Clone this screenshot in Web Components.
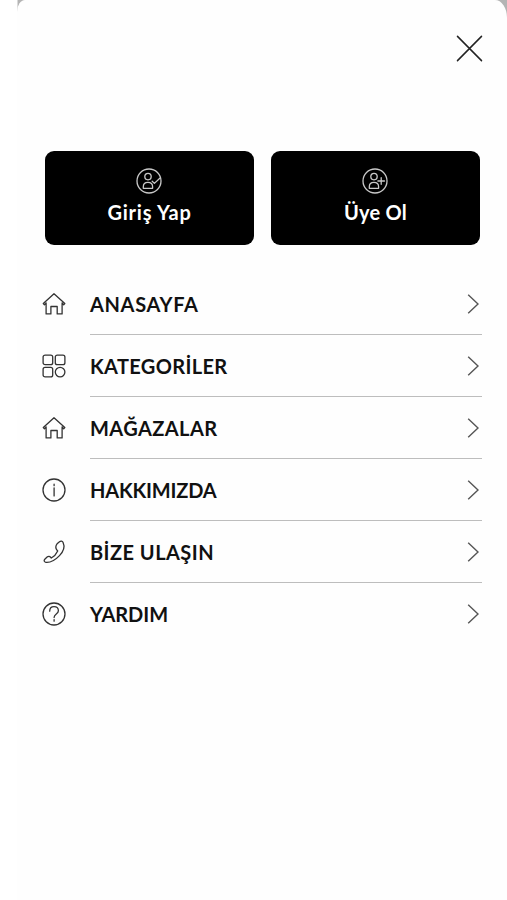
<!DOCTYPE html>
<html lang="tr"><head><meta charset="utf-8"><title>Menü</title>
<style>html,body{margin:0;background:#fff;height:900px;overflow:hidden}</style></head>
<body>
<side-menu>
  <close-button slot="close"></close-button>
  <auth-button slot="auth" icon="check" fit="84">Giriş Yap</auth-button>
  <auth-button slot="auth" icon="plus" fit="63">Üye Ol</auth-button>
  <menu-item icon="home" fit="108.5">ANASAYFA</menu-item>
  <menu-item icon="grid" fit="137.5">KATEGORİLER</menu-item>
  <menu-item icon="home" fit="127.5">MAĞAZALAR</menu-item>
  <menu-item icon="info" fit="126.5">HAKKIMIZDA</menu-item>
  <menu-item icon="phone" fit="124">BİZE ULAŞIN</menu-item>
  <menu-item icon="help" fit="78" last>YARDIM</menu-item>
</side-menu>
<script>
const ICONS = {
  home: '<path d="M2.3 12.6 13 2.8l10.8 9.8M5.1 11.8v11.1h4.8v-7.4h6.3v7.4h4.9V11.8M2.3 12.6l1.1 1.1 1.7-1.5M23.8 12.6l-1.1 1.1-1.6-1.5"/>',
  grid: '<rect x="2.1" y="2.1" width="9.6" height="9.6" rx="2"/><rect x="14.3" y="2.1" width="9.6" height="9.6" rx="2"/><rect x="2.1" y="14.3" width="9.6" height="9.6" rx="2"/><circle cx="19.1" cy="19.1" r="4.8"/>',
  info: '<circle cx="13" cy="13" r="11"/><path d="M13.1 10.8v8.1M13.1 7.2v1.5"/>',
  phone: '<path d="M16.4 4.4 18.5 2.7c1.2-1 2.8-.8 3.5.6 1.9 4.1.6 9.1-3.5 13.3-4.2 4.4-9.2 7.1-13.6 6.7-1.8-.2-2.3-1.9-1.1-3.1l2.3-2.1c1.1-1 2.6-.9 3.5.1l.7.8c2.8-1.6 5-4 6.4-7.1l-.8-.9c-1.4-1.7-1.4-4.2.5-6.6z"/>',
  help: '<circle cx="13" cy="13" r="11"/><path d="M8.7 10.2c0-2.8 1.8-4.5 4.3-4.5s4.4 1.6 4.4 4.1c0 3.2-4.3 3.3-4.3 6.7M13.1 18.6v1.6"/>',
  check: '<circle cx="13" cy="13" r="12"/><circle cx="12" cy="8.6" r="3.2"/><path d="M7.3 20.3v-1.5c0-3 1.8-4.4 4.6-4.4s4.7 1.4 4.7 4.4v1.5zM16.2 13.3l2.2 2.1 5.4-5.2"/>',
  plus: '<circle cx="13" cy="13" r="12"/><circle cx="12" cy="8.6" r="3.2"/><path d="M7.3 20.3v-1.5c0-3 1.8-4.4 4.6-4.4s4.7 1.4 4.7 4.4v1.5zM19.2 9.7v6.6M15.9 13h6.6"/>'
};
const svg = (name) => `<svg viewBox="0 0 26 26" width="26" height="26" fill="none" stroke="currentColor" stroke-width="1.3" stroke-linejoin="round" stroke-linecap="round">${ICONS[name]}</svg>`;

// Tracks a label out or in so that it takes the requested width.
function fitLabel(host) {
  const label = host.shadowRoot.querySelector('.label');
  const n = host.textContent.length;
  const w = label.getBoundingClientRect().width;
  label.style.letterSpacing = ((+host.getAttribute('fit') - w) / n) + 'px';
}

customElements.define('side-menu', class extends HTMLElement {
  constructor() {
    super();
    this.attachShadow({mode: 'open'}).innerHTML = `<style>
      :host{display:block;height:900px;background:linear-gradient(90deg,#fff 0 17px,#b4b4b4 18px);font-family:Lato,"Noto Sans",sans-serif;color:#111}
      .sheet{box-sizing:border-box;height:900px;margin-left:17px;background:#fefefe;border-radius:8px 12px 0 0 / 12px 18px 0 0;padding:35px 25px 0 25px}
      header{display:flex;justify-content:flex-end;height:115.5px}
      .auth{display:grid;grid-template-columns:209px 209px;gap:17px;padding-left:3px}
      nav{display:block;padding-top:28px}
    </style><div class="sheet"><header><slot name="close"></slot></header><div class="auth"><slot name="auth"></slot></div><nav><slot></slot></nav></div>`;
  }
});
customElements.define('close-button', class extends HTMLElement {
  constructor() {
    super();
    this.attachShadow({mode: 'open'}).innerHTML = `<style>:host{display:block;width:27px;height:27px;margin-right:-1px}svg{display:block}</style>
    <svg width="27" height="27" fill="none" stroke="#222" stroke-width="1.5" stroke-linecap="round"><path d="M1.5 1.4 25.5 25.6M25.5 1.4 1.5 25.6"/></svg>`;
  }
});
customElements.define('auth-button', class extends HTMLElement {
  connectedCallback() {
    this.attachShadow({mode: 'open'}).innerHTML = `<style>
      :host{display:flex;flex-direction:column;align-items:center;box-sizing:border-box;height:94px;padding-top:17px;background:#000;border-radius:9px;color:#fff}
      svg{display:block;color:#c8c8c8;margin-left:-.5px}
      .label{font-size:20px;font-weight:700;line-height:28px;margin-top:4.5px;white-space:nowrap}
    </style>${svg(this.getAttribute('icon'))}<span class="label"><slot></slot></span>`;
    fitLabel(this);
  }
});
customElements.define('menu-item', class extends HTMLElement {
  connectedCallback() {
    this.attachShadow({mode: 'open'}).innerHTML = `<style>
      :host{display:grid;grid-template-columns:48px 392px;height:62.15px;align-items:stretch}
      .icon{display:flex;align-items:center;color:#333;padding-top:.3px;margin-left:-1px}
      .row{display:flex;align-items:center;justify-content:space-between;box-sizing:border-box;border-bottom:1.5px solid #bdbdbd;padding:1.2px 3px 0 0}
      :host([last]) .row{border-color:transparent}
      .label{font-size:20px;font-weight:700;line-height:28px;white-space:nowrap}
    </style><span class="icon">${svg(this.getAttribute('icon'))}</span>
    <div class="row"><span class="label"><slot></slot></span><svg width="12" height="22" fill="none" stroke="#555" stroke-width="1.4"><path d="M1.2 1.8 11 11 1.2 20.2"/></svg></div>`;
    fitLabel(this);
  }
});
</script>
</body></html>
